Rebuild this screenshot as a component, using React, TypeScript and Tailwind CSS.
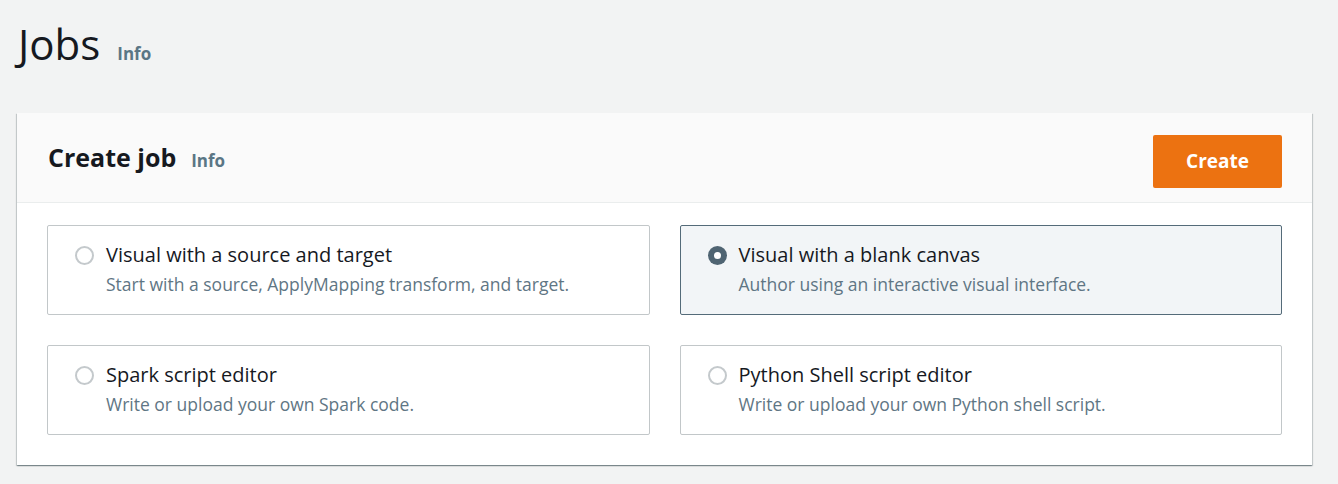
import { useState } from "react";

const options = [
  { id: "visual-source", title: "Visual with a source and target", desc: "Start with a source, ApplyMapping transform, and target." },
  { id: "visual-blank", title: "Visual with a blank canvas", desc: "Author using an interactive visual interface." },
  { id: "spark", title: "Spark script editor", desc: "Write or upload your own Spark code." },
  { id: "python", title: "Python Shell script editor", desc: "Write or upload your own Python shell script." },
];

function Radio({ checked }: { checked: boolean }) {
  return checked ? (
    <span className="flex h-[19px] w-[19px] items-center justify-center rounded-full bg-[#4f6472]">
      <span className="block h-[7px] w-[7px] rounded-full bg-white" />
    </span>
  ) : (
    <span className="block h-[19px] w-[19px] rounded-full border-2 border-[#c4c9cc] bg-white" />
  );
}

export default function App() {
  const [selected, setSelected] = useState("visual-blank");

  return (
    <div className="min-h-screen bg-[#f2f3f3] pl-[17px] pr-[26px] font-['Open_Sans',sans-serif] text-[#16191f]">
      <div className="flex h-[113px] items-baseline gap-[17px] pt-[19px] pl-[1px]">
        <h1 className="text-[42px] font-normal leading-[50px] text-[#16191f]">Jobs</h1>
        <span className="text-[17px] font-bold text-[#5a7685]">Info</span>
      </div>

      <div className="bg-white shadow-[0_1px_1px_0_rgba(0,28,36,0.3),1px_1px_1px_0_rgba(0,28,36,0.15),-1px_1px_1px_0_rgba(0,28,36,0.15)]">
        <div className="flex h-[90px] items-center justify-between border-b border-[#eaeded] bg-[#fafafa] pl-[31px] pr-[30px]">
          <div className="flex items-baseline gap-[15px]">
            <h2 className="text-[25px] font-bold text-[#16191f]">Create job</h2>
            <span className="text-[17px] font-bold text-[#5a7685]">Info</span>
          </div>
          <button className="mt-[7px] h-[53px] w-[129px] rounded-[2px] bg-[#ec7211] text-[19px] font-bold text-white">
            Create
          </button>
        </div>

        <div className="grid grid-cols-2 gap-[30px] px-[30px] pt-[22px] pb-[30px]">
          {options.map((o) => {
            const checked = o.id === selected;
            return (
              <button
                key={o.id}
                onClick={() => setSelected(o.id)}
                className={`flex h-[90px] items-start gap-[12px] rounded-[2px] border pt-[16px] pl-[27px] text-left ${
                  checked ? "border-[#546b79] bg-[#f2f5f7]" : "border-[#c2c7c9] bg-white"
                }`}
              >
                <span className="mt-[4px] block shrink-0">
                  <Radio checked={checked} />
                </span>
                <span className="flex flex-col">
                  <span className="text-[20px] leading-[26px] text-[#16191f]">{o.title}</span>
                  <span className="mt-[4px] text-[17.5px] leading-[24px] text-[#5f7684]">{o.desc}</span>
                </span>
              </button>
            );
          })}
        </div>
      </div>
    </div>
  );
}
